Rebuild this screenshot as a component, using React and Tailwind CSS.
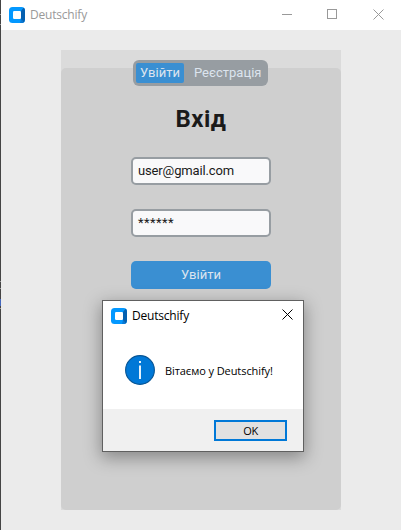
function AppIcon() {
  return (
    <svg width="16" height="16" viewBox="0 0 16 16" className="shrink-0">
      <rect width="16" height="16" rx="3.5" fill="#0398ff" />
      <path d="M12 4L14.5 .8Q16 1.6 16 3.5V12.5Q16 15 13.5 16H12Z" fill="#0560b0" />
      <path d="M12 12L14 14V16H11Z" fill="#0878d4" />
      <rect x="4" y="4" width="8" height="8" rx="1.2" fill="#fff" />
    </svg>
  );
}

function CloseIcon({ color, className }) {
  return (
    <svg width="11" height="11" viewBox="0 0 11 11" className={`shrink-0 ${className}`}>
      <path d="M.5.5L10.5 10.5M10.5.5L.5 10.5" stroke={color} />
    </svg>
  );
}

function TitleBar() {
  return (
    <header className="flex h-[30px] items-center bg-white pl-2 pr-[17px]">
      <AppIcon />
      <span className="ml-[5px] font-['Open_Sans','Noto_Sans',sans-serif] text-[12px] leading-4 tracking-[-0.2px] text-[#999]">
        Deutschify
      </span>
      <div className="ml-auto flex items-start">
        <svg width="10" height="10" className="mr-[35px]">
          <path d="M0 5.5H10" stroke="#999" />
        </svg>
        <svg width="10" height="10" className="mr-[36px]">
          <rect x=".5" y=".5" width="9" height="9" fill="none" stroke="#999" />
        </svg>
        <CloseIcon color="#999" className="mb-px" />
      </div>
    </header>
  );
}

function Field({ children, className }) {
  return (
    <div className={`flex h-7 w-[140px] rounded-[5px] border-2 border-[#979da2] bg-[#f9f9fa] pl-[5px] text-[13px] leading-[23px] text-[#1a1a1a] ${className}`}>
      {children}
    </div>
  );
}

function LoginPanel() {
  return (
    <main className="ml-[60px] mt-5 flex h-[460px] w-[280px] flex-col bg-[#dbdbdb] pt-[18px] font-[Roboto,sans-serif]">
      <div className="flex flex-1 flex-col items-center rounded-[5px] bg-[#cfcfcf]">
        <div className="-mt-2 ml-[-1px] flex h-[26px] w-[135px] rounded-[6px] bg-[#979da2] p-[3px] text-[13px] leading-[19px] text-[#dce4ee]">
          <span className="h-5 w-12 rounded-[2px] bg-[#3a8fd2] text-center">Увійти</span>
          <span className="flex-1 pl-[10px]">Реєстрація</span>
        </div>
        <h1 className="mt-[17px] h-8 text-[24px] font-bold leading-8 tracking-[0.5px] text-[#1a1a1a]">Вхід</h1>
        <Field className="mt-[22px] tracking-[-0.14px]">user@gmail.com</Field>
        <Field className="mt-6 tracking-[0.4px]">******</Field>
        <button className="mt-6 h-7 w-[140px] rounded-[5px] bg-[#3a8fd2] pb-px text-[13px] leading-[26px] text-[#dce4ee]">
          Увійти
        </button>
      </div>
    </main>
  );
}

function WelcomeDialog() {
  return (
    <section className="absolute left-[102px] top-[300px] flex h-[152px] w-[202px] flex-col border border-[#606060] bg-white font-['Open_Sans','Noto_Sans',sans-serif] text-black shadow-[0_5px_16px_1px_rgba(0,0,0,0.34)]">
      <div className="flex h-[29px] items-center pl-2 pr-[10px]">
        <AppIcon />
        <span className="ml-[5px] text-[12px] leading-4 tracking-[-0.2px]">Deutschify</span>
        <CloseIcon color="#000" className="ml-auto -mt-[2px]" />
      </div>
      <div className="flex h-[79px] items-center pl-[22px]">
        <svg width="30" height="30" viewBox="0 0 30 30" className="shrink-0">
          <circle cx="15" cy="15" r="14.4" fill="#0078d7" stroke="#085594" strokeWidth="1.1" />
          <path d="M15 6V8M15 10.5V24" stroke="#fff" strokeWidth="1.8" />
        </svg>
        <span className="ml-[10px] mt-[2px] whitespace-nowrap text-[11px] leading-4 tracking-[-0.08px]">Вітаємо у Deutschify!</span>
      </div>
      <div className="flex flex-1 justify-end bg-[#f0f0f0] pr-4 pt-[11px]">
        <button className="h-[21px] w-[73px] border-2 border-[#0078d7] bg-[#e1e1e1] pt-px text-center text-[11px] leading-4 tracking-[-0.3px]">
          OK
        </button>
      </div>
    </section>
  );
}

function BackdropEdge() {
  return (
    <div className="flex w-px shrink-0 flex-col bg-[#444]">
      <i className="mt-[14px] h-px bg-[#999]" />
      <i className="mt-[9px] h-px bg-[#999]" />
      <i className="mt-[256px] h-px bg-[#999]" />
      <i className="mt-[6px] h-px bg-[#999]" />
      <i className="mt-[10px] h-[7px] bg-[#4467bd]" />
      <i className="mt-0.5 h-px bg-[#999]" />
    </div>
  );
}

export default function App() {
  return (
    <div className="relative flex h-[530px] w-[401px] overflow-hidden bg-[#ebebeb]">
      <BackdropEdge />
      <div className="flex-1">
        <TitleBar />
        <LoginPanel />
      </div>
      <WelcomeDialog />
    </div>
  );
}
